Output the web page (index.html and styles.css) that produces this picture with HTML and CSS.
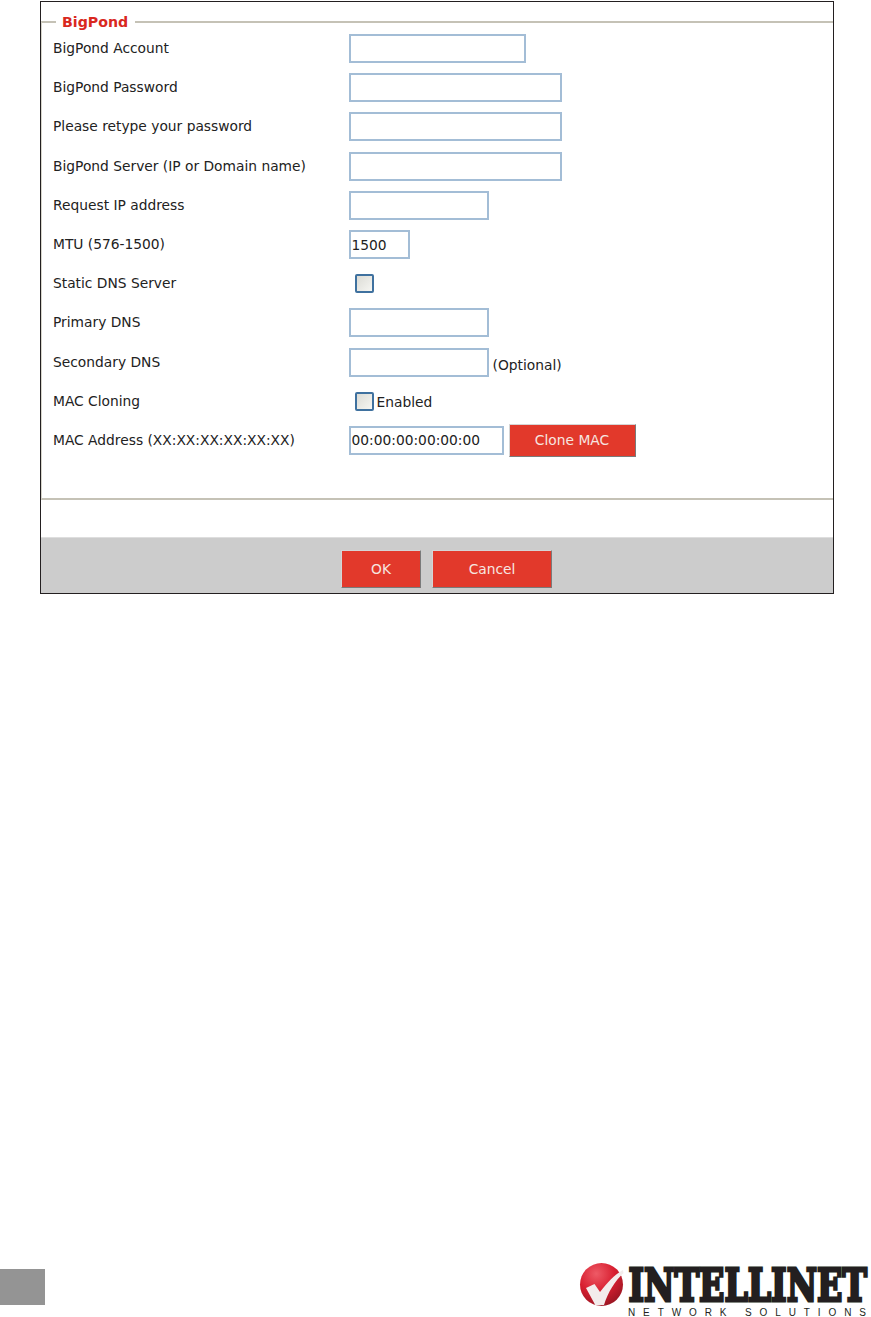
FILE: index.html
```html
<!DOCTYPE html>
<html lang="en">
<head>
<meta charset="utf-8">
<title>BigPond</title>
<link rel="stylesheet" href="styles.css">
</head>
<body>
<main class="panel">
  <fieldset class="group">
    <legend class="group-title">BigPond</legend>
    <div class="row"><span class="label">BigPond Account</span><input class="field w-account" type="text"></div>
    <div class="row"><span class="label">BigPond Password</span><input class="field w-long" type="text"></div>
    <div class="row"><span class="label">Please retype your password</span><input class="field w-long" type="text"></div>
    <div class="row"><span class="label">BigPond Server (IP or Domain name)</span><input class="field w-long" type="text"></div>
    <div class="row"><span class="label">Request IP address</span><input class="field w-ip" type="text"></div>
    <div class="row"><span class="label">MTU (576-1500)</span><input class="field w-mtu" type="text" value="1500"></div>
    <div class="row"><span class="label">Static DNS Server</span><span class="check"></span></div>
    <div class="row"><span class="label">Primary DNS</span><input class="field w-ip" type="text"></div>
    <div class="row"><span class="label">Secondary DNS</span><input class="field w-ip" type="text"><span class="note">(Optional)</span></div>
    <div class="row"><span class="label">MAC Cloning</span><span class="check"></span><span class="check-label">Enabled</span></div>
    <div class="row"><span class="label">MAC Address (XX:XX:XX:XX:XX:XX)</span><input class="field w-mac" type="text" value="00:00:00:00:00:00"><button class="btn btn-clone" type="button">Clone MAC</button></div>
  </fieldset>
  <div class="spacer"></div>
  <div class="actions">
    <button class="btn btn-ok" type="button">OK</button>
    <button class="btn btn-cancel" type="button">Cancel</button>
  </div>
</main>
<footer class="footer">
  <div class="page-tab"></div>
  <svg class="logo" width="292" height="58" viewBox="0 0 292 58" role="img" aria-label="Intellinet Network Solutions">
    <defs>
      <radialGradient id="ball" cx="0.38" cy="0.25" r="0.85">
        <stop offset="0" stop-color="#ee5a66"/>
        <stop offset="0.5" stop-color="#d81f30"/>
        <stop offset="1" stop-color="#8e1420"/>
      </radialGradient>
    </defs>
    <circle cx="22.5" cy="25.5" r="21.5" fill="url(#ball)"/>
    <path d="M7 29 L15.5 25 L21 33 C28 24 35 16 44 11 L44.5 14 C36 22 29 33 25 46 L16.5 46.5 Z" fill="#f3ecec"/>
    <text class="logo-name" transform="translate(49.5 42) scale(.73 1)">INTELLINET</text>
    <text class="logo-sub" x="49" y="56.5" textLength="238">NETWORK SOLUTIONS</text>
  </svg>
</footer>
</body>
</html>
```

FILE: styles.css
```css
* { box-sizing: border-box; }
html, body { margin: 0; padding: 0; }
body {
  width: 871px;
  height: 1317px;
  background: #fff;
  display: flex;
  flex-direction: column;
  font-family: "DejaVu Sans", sans-serif;
  font-size: 13.8px;
  color: #222;
  overflow: hidden;
}
.panel {
  width: 794px;
  height: 593px;
  margin: 1px 0 0 40px;
  border: 1px solid #231f20;
  background: #fff;
  display: flex;
  flex-direction: column;
}
.group {
  margin: 10px 0 0;
  padding: 0 0 0 11px;
  height: 488px;
  flex: none;
  border: 0;
  border-top: 2px solid #c5c2b6;
  border-bottom: 2px solid #c5c2b6;
  border-left: 1px solid #d8d6cc;
  min-width: 0;
}
.group-title {
  margin-left: 3px;
  padding: 0 7px 0 6px;
  color: #d9281e;
  font-weight: 700;
  font-size: 14.2px;
  line-height: 20px;
}
.row {
  height: 39.2px;
  display: flex;
  align-items: center;
}
.group .row:first-of-type { margin-top: -3px; }
.label { width: 295.5px; flex: none; padding-bottom: 1px; }
.field {
  height: 29px;
  border: 2px solid #a3bdd6;
  background: #fff;
  padding: 0 1px;
  font: inherit;
  color: #222;
  outline: 0;
}
.w-account { width: 177px; }
.w-long { width: 213px; }
.w-ip { width: 140px; }
.w-mtu { width: 61px; }
.w-mac { width: 155px; }
.note { margin-left: 4px; position: relative; top: 3px; }
.check {
  width: 19px;
  height: 19px;
  margin-left: 6px;
  border: 2px solid #3f719f;
  border-radius: 2px;
  background: linear-gradient(135deg, #dcdcd6, #f6f6f2);
  flex: none;
}
.check-label { margin-left: 3px; padding-top: 2px; }
.btn {
  height: 33px;
  padding: 0;
  border: 1px solid;
  border-color: #d5d5d5 #7a7a7a #7a7a7a #d5d5d5;
  background: #e2392b;
  color: #f6e6e0;
  font: inherit;
}
.btn-clone { width: 127px; margin-left: 5px; }
.spacer { flex: 1; }
.actions {
  height: 56px;
  flex: none;
  background: #cccccc;
  border-top: 1px solid #dedede;
  display: flex;
  gap: 11px;
  padding: 12px 0 0 300px;
}
.btn-ok { width: 80px; height: 38px; }
.btn-cancel { width: 120px; height: 38px; }
.footer {
  margin-top: auto;
  display: flex;
  justify-content: space-between;
  align-items: flex-end;
}
.page-tab {
  width: 45px;
  height: 36px;
  margin-bottom: 12px;
  background: #949494;
}
.logo { display: block; }
.logo-name {
  font-family: "DejaVu Serif", serif;
  font-weight: 700;
  font-size: 45.5px;
  fill: #231f20;
  stroke: #231f20;
  stroke-width: 3px;
}
.logo-sub {
  font-family: "Liberation Sans", sans-serif;
  font-size: 10px;
  fill: #231f20;
}
```
